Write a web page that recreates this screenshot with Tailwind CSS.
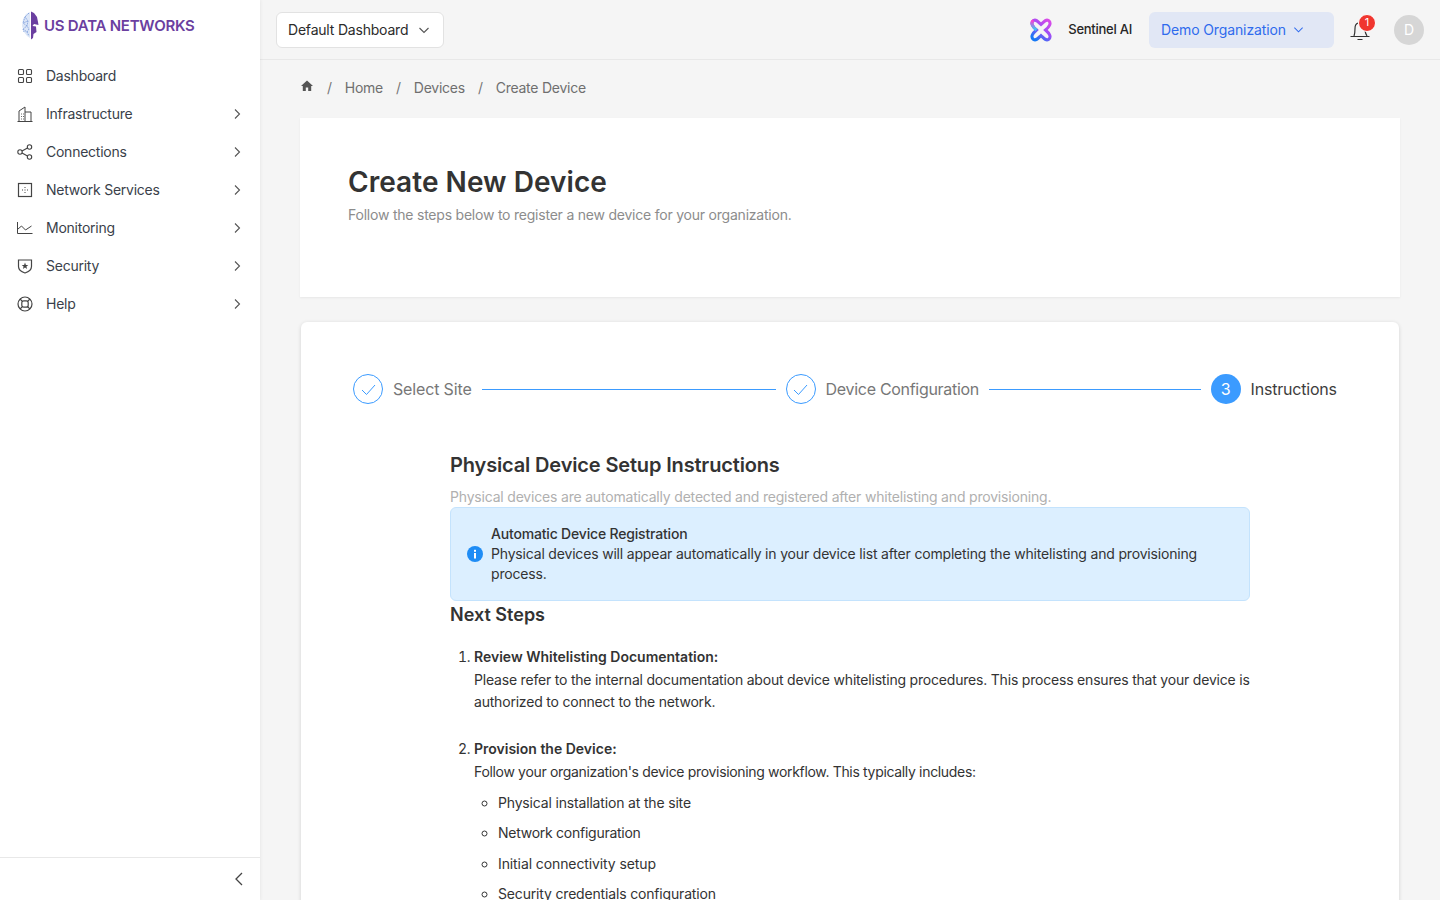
<!DOCTYPE html>
<html lang="en">
<head>
  <meta charset="UTF-8" />
  <title>Create Device</title>
  <meta name="viewport" content="width=device-width, initial-scale=1.0" />
  <script src="https://cdn.jsdelivr.net/npm/@tailwindcss/browser@4"></script>
</head>
<body class="bg-[#f5f5f5] text-[#262626] font-['Inter',sans-serif] h-screen overflow-hidden flex">

  <!-- Sidebar -->
  <aside class="w-[260px] shrink-0 h-full bg-white flex flex-col shadow-[1px_0_3px_rgba(0,0,0,0.05)] z-10">
    <div class="h-[52px] pl-[21px] flex items-center gap-[5px]">
      <svg width="18" height="29" viewBox="0 0 18 29" class="mt-[-2px]">
        <path d="M9 1 L5 3 L2 8 L1 15 L3 21 L6 25 L9 27Z" fill="#dce6f7"/>
        <path d="M8 2 L4 6 L7 10 L2 12 L6 15 L2 18 L6 21 L8 25 M4 6 L2 12 M7 10 L6 15 L8 18 L6 21 M2 18 L3 21" fill="none" stroke="#7f9fdc" stroke-width="0.9" stroke-dasharray="1.4 0.8"/>
        <path d="M10 0.500 L13 2 L16 6 L17 11 L17.500 14 L13 13 L11.500 15 L15 15.500 L15.500 21 L12.500 23 L12 27 L10 28.500Z" fill="#6b3fa0"/>
      </svg>
      <span class="text-[15px] font-semibold text-[#6b3fa0] tracking-[-0.25px] mt-[-1px] translate-y-[1px]">US DATA NETWORKS</span>
    </div>

    <nav class="mt-[5px] text-[#3a3f4a] text-[14px] tracking-[-0.25px]">
      <a class="h-[38px] pl-[17px] pr-[17px] flex items-center">
        <svg class="w-4 h-4 mr-[13px]" viewBox="0 0 16 16" fill="none" stroke="#444" stroke-width="1.1"><rect x="1.500" y="1.500" width="5" height="5" rx="1"/><rect x="9.500" y="1.500" width="5" height="5" rx="1"/><rect x="1.500" y="9.500" width="5" height="5" rx="1"/><rect x="9.500" y="9.500" width="5" height="5" rx="1"/></svg>
        <span class="-translate-y-[1px]">Dashboard</span>
      </a>
      <a class="h-[38px] pl-[17px] pr-[17px] flex items-center">
        <svg class="w-4 h-4 mr-[13px]" viewBox="0 0 16 16" fill="none" stroke="#444" stroke-width="1"><path d="M0.500 15.500H15.500M2 15.500V5L8 1V15.500M8 6H14V15.500M4 8h0.800M6 8h0.800M4 10.500h0.800M6 10.500h0.800M4 13h0.800M6 13h0.800"/></svg>
        <span class="flex-1 -translate-y-[1px]">Infrastructure</span>
        <svg class="w-[12px] h-[12px]" viewBox="0 0 12 12" fill="none" stroke="#555" stroke-width="1.1"><path d="M4 1.500 8.500 6 4 10.500"/></svg>
      </a>
      <a class="h-[38px] pl-[17px] pr-[17px] flex items-center">
        <svg class="w-4 h-4 mr-[13px]" viewBox="0 0 16 16" fill="none" stroke="#444" stroke-width="1.1"><circle cx="3" cy="8" r="2.200"/><circle cx="12.500" cy="3" r="2.200"/><circle cx="12.500" cy="13" r="2.200"/><path d="M5 7 10.500 4M5 9l5.500 3"/></svg>
        <span class="flex-1 -translate-y-[1px]">Connections</span>
        <svg class="w-[12px] h-[12px]" viewBox="0 0 12 12" fill="none" stroke="#555" stroke-width="1.1"><path d="M4 1.500 8.500 6 4 10.500"/></svg>
      </a>
      <a class="h-[38px] pl-[17px] pr-[17px] flex items-center">
        <svg class="w-4 h-4 mr-[13px]" viewBox="0 0 16 16" fill="none" stroke="#444" stroke-width="1.200"><rect x="1.500" y="1.500" width="13" height="13"/><path d="M7.500 5.500h1M5 8h1M7.500 8h1M10 8h1M7.500 10.500h1"/></svg>
        <span class="flex-1 -translate-y-[1px]">Network Services</span>
        <svg class="w-[12px] h-[12px]" viewBox="0 0 12 12" fill="none" stroke="#555" stroke-width="1.1"><path d="M4 1.500 8.500 6 4 10.500"/></svg>
      </a>
      <a class="h-[38px] pl-[17px] pr-[17px] flex items-center">
        <svg class="w-4 h-4 mr-[13px]" viewBox="0 0 16 16" fill="none" stroke="#444" stroke-width="1"><path d="M0.500 2V13.500H15.500M1 9 4.500 6 8.500 10 14.500 6"/></svg>
        <span class="flex-1 -translate-y-[1px]">Monitoring</span>
        <svg class="w-[12px] h-[12px]" viewBox="0 0 12 12" fill="none" stroke="#555" stroke-width="1.1"><path d="M4 1.500 8.500 6 4 10.500"/></svg>
      </a>
      <a class="h-[38px] pl-[17px] pr-[17px] flex items-center">
        <svg class="w-4 h-4 mr-[13px]" viewBox="0 0 16 16" fill="none" stroke="#444" stroke-width="1.200"><path d="M1.500 2H14.500V8.500C14.500 12 11 14 8 15 5 14 1.500 12 1.500 8.500Z"/><path d="M8 4.500 8.900 6.900 11.300 7 9.400 8.500 10.100 10.900 8 9.600 5.900 10.900 6.600 8.500 4.700 7 7.100 6.900Z" fill="#444" stroke="none"/></svg>
        <span class="flex-1 -translate-y-[1px]">Security</span>
        <svg class="w-[12px] h-[12px]" viewBox="0 0 12 12" fill="none" stroke="#555" stroke-width="1.1"><path d="M4 1.500 8.500 6 4 10.500"/></svg>
      </a>
      <a class="h-[38px] pl-[17px] pr-[17px] flex items-center">
        <svg class="w-4 h-4 mr-[13px]" viewBox="0 0 16 16" fill="none" stroke="#444" stroke-width="1.200"><circle cx="8" cy="8" r="7"/><rect x="4.800" y="4.800" width="6.400" height="6.400" rx="2"/><path d="M3 3 5.700 5.700M13 3 10.300 5.700M3 13 5.700 10.300M13 13 10.300 10.300"/></svg>
        <span class="flex-1 -translate-y-[1px]">Help</span>
        <svg class="w-[12px] h-[12px]" viewBox="0 0 12 12" fill="none" stroke="#555" stroke-width="1.1"><path d="M4 1.500 8.500 6 4 10.500"/></svg>
      </a>
    </nav>

    <div class="mt-auto h-[43px] border-t border-[#e8e8e8] flex items-center justify-end pr-[14px]">
      <svg class="w-[14px] h-[14px]" viewBox="0 0 14 14" fill="none" stroke="#444" stroke-width="1.300"><path d="M10 1 4 7l6 6"/></svg>
    </div>
  </aside>

  <div class="flex-1 min-w-0 flex flex-col h-full">
    <!-- Header -->
    <header class="h-[60px] shrink-0 border-b border-[#e8e8e8] flex items-center pl-[16px] pr-[16px]">
      <button class="h-[36px] w-[168px] bg-white border border-[#e2e2e2] rounded-[6px] pl-[11px] pr-[13px] flex items-center justify-between text-[14px] text-[#2b2b2b] tracking-[-0.2px]">
        <span>Default Dashboard</span>
        <svg class="w-[12px] h-[12px]" viewBox="0 0 12 12" fill="none" stroke="#555" stroke-width="1.1"><path d="M1.500 4 6 8.500 10.500 4"/></svg>
      </button>
      <div class="ml-auto flex items-center">
        <svg width="24" height="24" viewBox="0 0 24 24" fill="none" class="mr-[15px]">
          <defs>
            <linearGradient id="sx" x1="0.900" y1="0" x2="0.200" y2="1"><stop offset="0" stop-color="#d94be8"/><stop offset="0.450" stop-color="#a24df5"/><stop offset="1" stop-color="#1478f5"/></linearGradient>
            <linearGradient id="sy" x1="0" y1="0" x2="0" y2="1"><stop offset="0" stop-color="#ff3fd0"/><stop offset="1" stop-color="#2fd0f5"/></linearGradient>
          </defs>
          <path d="M4.500 2.500C7 1 9 3.500 12 6.500 15 3.500 17 1 19.500 2.500 23 5 20 9 16.500 12 20 15 23 19 19.500 21.500 17 23 15 20.500 12 17.500 9 20.500 7 23 4.500 21.500 1 19 4 15 7.500 12 4 9 1 5 4.500 2.500Z" stroke="url(#sx)" stroke-width="3"/>
          <path d="M7.500 12C4 9 1 5 4.500 2.500" stroke="url(#sy)" stroke-width="3"/>
        </svg>
        <span class="text-[13px] font-medium text-[#262626] tracking-[-0.25px] mr-[17px]">Sentinel AI</span>
        <button class="h-[36px] w-[185px] bg-[#e1e7f5] rounded-[6px] pl-[12px] flex items-center text-[14px] text-[#2f6bed] tracking-[-0.12px]">
          <span>Demo Organization</span>
          <svg class="w-[11px] h-[11px] ml-[7px]" viewBox="0 0 12 12" fill="none" stroke="#2f6bed" stroke-width="1.1"><path d="M1.500 4 6 8.500 10.500 4"/></svg>
        </button>
        <div class="relative ml-[16px] w-[20px] h-[20px] mt-[2px]">
          <svg class="w-[20px] h-[20px]" viewBox="0 0 20 20" fill="none" stroke="#333" stroke-width="1.200"><path d="M4 15C5 12 5 10 5 7.500 5 4.500 6.500 2.500 8 2 M14 6C15 9 15 12 17 15 M0.500 15.500H19.500M7.500 18.500H12.500"/></svg>
          <span class="absolute -top-[7px] left-[8px] w-[18px] h-[18px] rounded-full bg-[#f0362f] border border-white text-white text-[11px] flex items-center justify-center">1</span>
        </div>
        <div class="ml-[24px] w-[30px] h-[30px] rounded-full bg-[#d6d6d6] text-white text-[14px] flex items-center justify-center">D</div>
      </div>
    </header>

    <!-- Main -->
    <main class="flex-1 min-h-0 overflow-hidden px-[40px]">
      <div class="h-[58px] pb-[3px] flex items-center text-[14px] text-[#6f6f6f] tracking-[-0.25px]">
        <svg class="w-[14px] h-[14px] mt-[-4px]" viewBox="0 0 14 14" fill="#555"><path d="M7 1.500 1 7h1.800v5H5.800V8.500H8.200V12H11.200V7H13Z"/></svg>
        <span class="mx-[13px] text-[#777]">/</span>
        <span>Home</span>
        <span class="mx-[13px] text-[#777]">/</span>
        <span>Devices</span>
        <span class="mx-[13px] text-[#777]">/</span>
        <span>Create Device</span>
      </div>

      <section class="h-[179px] bg-white shadow-[0_1px_2px_rgba(0,0,0,0.06)] px-[48px] pt-[46px]">
        <h1 class="text-[28px] leading-[36px] font-semibold text-[#333] tracking-[0.05px]">Create New Device</h1>
        <p class="mt-[4px] text-[14px] leading-[22px] text-[#8c8c8c] tracking-[-0.22px]">Follow the steps below to register a new device for your organization.</p>
      </section>

      <section class="mt-[25px] mx-[1px] bg-white rounded-[6px] shadow-[0_1px_4px_rgba(0,0,0,0.14)] h-[700px] pt-[52px]">
        <!-- Steps -->
        <div class="pl-[52px] flex items-center h-[30px] text-[16px] tracking-[-0.15px]">
          <span class="w-[30px] h-[30px] rounded-full border border-[#3b9bff] flex items-center justify-center shrink-0">
            <svg class="w-[15px] h-[15px]" viewBox="0 0 15 15" fill="none" stroke="#3b9bff" stroke-width="1"><path d="M1 8 5.500 12.500 14 3"/></svg>
          </span>
          <span class="ml-[10px] text-[#777]">Select Site</span>
          <span class="mx-[10px] w-[294px] h-px bg-[#3b9bff]"></span>
          <span class="w-[30px] h-[30px] rounded-full border border-[#3b9bff] flex items-center justify-center shrink-0">
            <svg class="w-[15px] h-[15px]" viewBox="0 0 15 15" fill="none" stroke="#3b9bff" stroke-width="1"><path d="M1 8 5.500 12.500 14 3"/></svg>
          </span>
          <span class="ml-[10px] text-[#777] w-[153px] whitespace-nowrap tracking-[-0.3px]">Device Configuration</span>
          <span class="mx-[10px] w-[212px] h-px bg-[#3b9bff]"></span>
          <span class="w-[30px] h-[30px] rounded-full bg-[#3b9bff] text-white flex items-center justify-center shrink-0">3</span>
          <span class="ml-[10px] text-[#3d3d3d] tracking-[-0.2px]">Instructions</span>
        </div>

        <div class="w-[800px] ml-[149px] mt-[49px]">
          <h2 class="text-[20px] leading-[24px] font-semibold text-[#333] tracking-[-0.15px]">Physical Device Setup Instructions</h2>
          <p class="mt-[9px] text-[14px] leading-[21px] text-[#b0b0b0] tracking-[-0.19px]">Physical devices are automatically detected and registered after whitelisting and provisioning.</p>

          <div class="h-[94px] bg-[#dcefff] border border-[#c4e3fd] rounded-[6px] pl-[16px] pr-[40px] flex items-center">
            <svg class="w-4 h-4 shrink-0" viewBox="0 0 16 16"><circle cx="8" cy="8" r="8" fill="#1e8cf5"/><rect x="7" y="7" width="2" height="5.500" fill="#fff"/><rect x="7" y="3.800" width="2" height="2" fill="#fff"/></svg>
            <div class="ml-[8px] text-[14px] leading-[20px] text-[#333] tracking-[-0.18px]">
              <p class="font-medium">Automatic Device Registration</p>
              <p>Physical devices will appear automatically in your device list after completing the whitelisting and provisioning process.</p>
            </div>
          </div>

          <h3 class="mt-[2px] text-[18px] leading-[24px] font-semibold text-[#333]">Next Steps</h3>

          <ol class="mt-[19px] pl-[24px] list-decimal text-[14px] leading-[22px] text-[#333] tracking-[-0.17px]">
            <li>
              <strong class="font-semibold tracking-normal">Review Whitelisting Documentation:</strong>
              <p class="mt-[1px] tracking-[-0.2px]">Please refer to the internal documentation about device whitelisting procedures. This process ensures that your device is authorized to connect to the network.</p>
            </li>
            <li class="mt-[25px]">
              <strong class="font-semibold tracking-normal">Provision the Device:</strong>
              <p class="mt-[1px] tracking-[-0.33px]">Follow your organization's device provisioning workflow. This typically includes:</p>
              <ul class="mt-[9px] pl-[24px] list-[circle] space-y-[8.300px]">
                <li>Physical installation at the site</li>
                <li class="tracking-[-0.26px]">Network configuration</li>
                <li class="tracking-[-0.1px]">Initial connectivity setup</li>
                <li>Security credentials configuration</li>
              </ul>
            </li>
          </ol>
        </div>
      </section>
    </main>
  </div>

</body>
</html>
